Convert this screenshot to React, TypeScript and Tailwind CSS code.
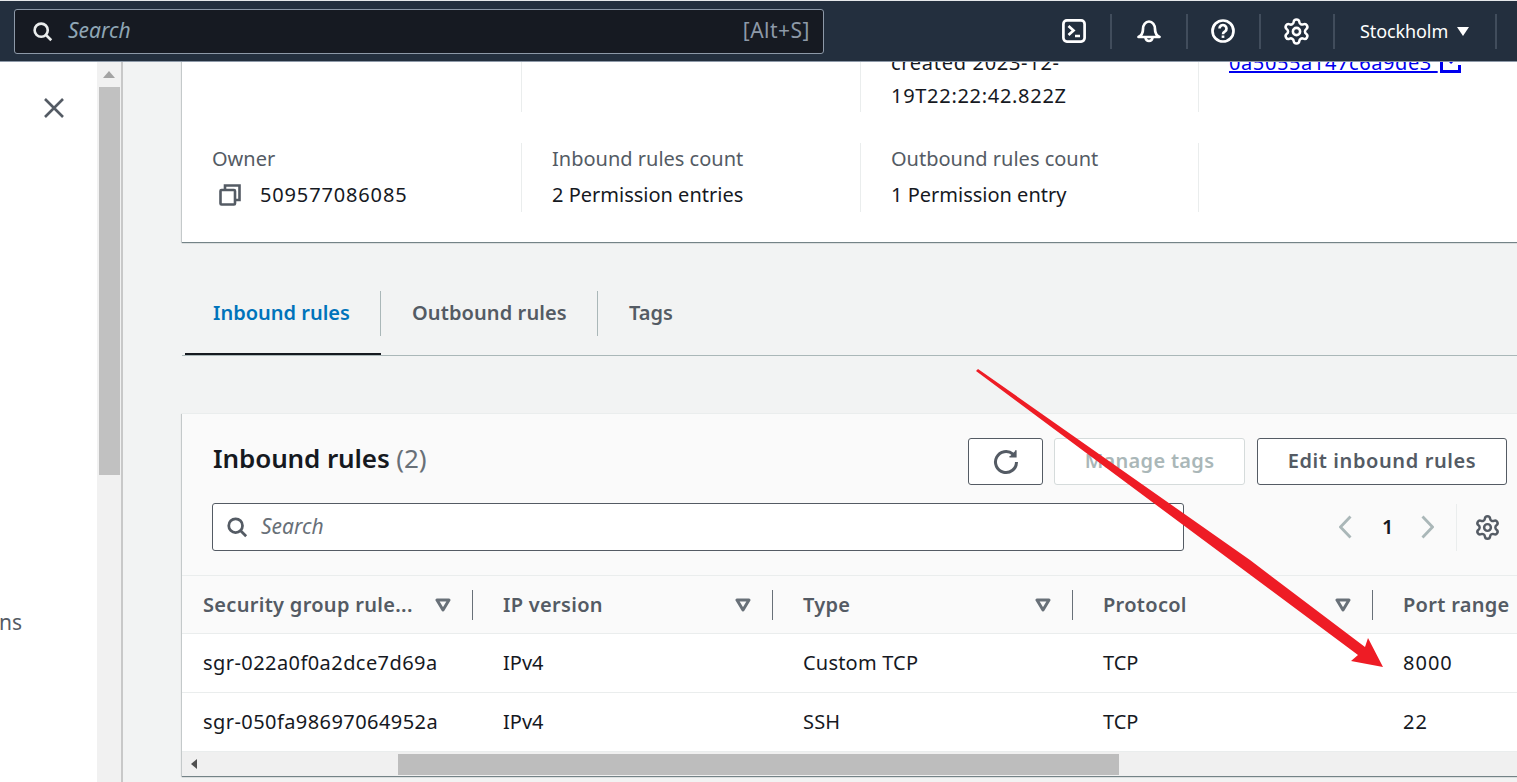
import { Settings } from "lucide-react";

const font = { fontFamily: '"Noto Sans", sans-serif' };

function SearchIcon({ className }: { className?: string }) {
  return (
    <svg viewBox="0 0 24 24" fill="none" stroke="currentColor" strokeWidth="3" className={className}>
      <circle cx="10.500" cy="10.500" r="7.500" />
      <path d="M16 16l6 6" />
    </svg>
  );
}

function SortIcon() {
  return (
    <svg viewBox="0 0 16 14" className="w-4 h-[14px] shrink-0" fill="none" stroke="#687078" strokeWidth="3">
      <path d="M2 2h12L8 12z" strokeLinejoin="round" />
    </svg>
  );
}

function Chevron({ flip }: { flip?: boolean }) {
  return (
    <svg viewBox="0 0 13 24" className="w-[13px] h-[24px] shrink-0" fill="none" stroke="#aab7b8" strokeWidth="2.800">
      <path d={flip ? "M1.500 1.500L11.500 12L1.500 22.500" : "M11.500 1.500L1.500 12L11.500 22.500"} />
    </svg>
  );
}

function Divider() {
  return <div className="w-[2px] h-[35px] bg-[#414d5c]" />;
}

function TopBar() {
  return (
    <header className="h-[61px] bg-[#232f3e] flex items-center shrink-0 border-t border-[#e6e8ea] text-white">
      <div className="ml-[14px] w-[810px] h-[45px] bg-[#161a22] border border-[#8d99a8] rounded-[3px] flex items-center pl-[17px] pr-[13px]">
        <SearchIcon className="w-[21px] h-[21px] text-[#eaeded]" />
        <span className="ml-[15px] italic text-[21px] text-[#8fa6b5]">Search</span>
        <span className="ml-auto text-[21px] tracking-[0.5px] text-[#8d99a8]">[Alt+S]</span>
      </div>
      <div className="ml-[238px] w-[24px] h-[24px]">
        <svg viewBox="0 0 24 24" fill="none" stroke="white" strokeWidth="2.700" className="w-full h-full">
          <rect x="1.400" y="1.400" width="21.200" height="21.200" rx="3.500" />
          <path d="M6.500 7l5 4.500-5 4.500M13 17h5" />
        </svg>
      </div>
      <div className="ml-[24px]"><Divider /></div>
      <div className="ml-[25px] w-[24px] h-[24px]">
        <svg viewBox="0 0 24 24" fill="none" stroke="white" strokeWidth="2.700" strokeLinejoin="round" className="w-full h-full">
          <path d="M1.500 18c2-1 4.500-3 4.500-8 0-4 2.500-7.500 6-7.500s6 3.500 6 7.500c0 5 2.500 7 4.500 8z" />
          <path d="M8.500 18.500a3.500 3.500 0 0 0 7 0" />
        </svg>
      </div>
      <div className="ml-[25px]"><Divider /></div>
      <div className="ml-[23px] w-[24px] h-[24px]">
        <svg viewBox="0 0 24 24" fill="none" stroke="white" strokeWidth="2.700" className="w-full h-full">
          <circle cx="12" cy="12" r="10.500" />
          <path d="M8.500 9.500a3.500 3.500 0 1 1 5.500 2.900c-1.300.8-2 1.400-2 2.800" />
          <path d="M12 16.500v2.400" />
        </svg>
      </div>
      <div className="ml-[24px]"><Divider /></div>
      <Settings className="ml-[21px] text-white" size={29} strokeWidth={2.100} />
      <div className="ml-[22px]"><Divider /></div>
      <span className="ml-[25px] text-[18px] tracking-[-0.1px] text-white">Stockholm</span>
      <svg viewBox="0 0 12 9" className="ml-[9px] w-[12px] h-[9px]"><path d="M0 0h12L6 9z" fill="white" /></svg>
      <div className="ml-[26px]"><Divider /></div>
    </header>
  );
}

function SideNav() {
  return (
    <aside className="w-[97px] shrink-0 bg-white overflow-hidden text-[#545b64]">
      <svg viewBox="0 0 20 20" className="mt-[36px] ml-[44px] w-[20px] h-[20px]" fill="none" stroke="#545b64" strokeWidth="2.600">
        <path d="M1 1l18 18M19 1L1 19" />
      </svg>
      <div className="mt-[489px] -ml-[1px] text-[21px] leading-[30px]">ns</div>
    </aside>
  );
}

function PageScrollbar() {
  return (
    <div className="w-[26px] shrink-0 bg-[#f1f1f1] border-r-2 border-r-[#c8c8c8] flex flex-col items-center">
      <svg viewBox="0 0 12 7" className="mt-[9px] w-[12px] h-[7px]"><path d="M0 7h12L6 0z" fill="#a3a3a3" /></svg>
      <div className="mt-[9px] w-[21px] h-[388px] bg-[#c1c1c1]" />
    </div>
  );
}

function Detail({ label, value, last }: { label: string; value: React.ReactNode; last?: boolean }) {
  return (
    <div className={`h-[69px] pl-[30px] ${last ? "" : "border-r border-[#eaeded]"}`}>
      <div className="text-[20px] leading-[32px] text-[#545b64]">{label}</div>
      <div className="mt-[2px] text-[20px] leading-[36px] text-[#16191f] flex items-center">{value}</div>
    </div>
  );
}

function SummaryCard() {
  return (
    <section className="-mt-[50px] w-[1400px] bg-white shadow-[0_1px_1px_0_rgba(0,28,36,0.45),-1px_1px_1px_0_rgba(0,28,36,0.12)] pb-[30px]">
      <div className="grid grid-cols-[340px_339px_338px_1fr] h-[100px] text-[20px] leading-[33px] text-[#16191f]">
        <div className="border-r border-[#eaeded]" />
        <div className="border-r border-[#eaeded]" />
        <div className="border-r border-[#eaeded] pl-[30px] flex flex-col justify-end">
          <div className="w-[220px] tracking-[0.7px]">created 2023-12-19T22:22:42.822Z</div>
        </div>
        <div className="pl-[30px] pt-[34px]">
          <span className="text-[#0000ee] underline decoration-2 tracking-[0.6px] whitespace-pre">0a5055a147c6a9de3 </span>
          <svg viewBox="0 0 21 21" className="inline-block ml-[2px] w-[21px] h-[21px] align-[-3px]" fill="none" stroke="#0000ee" strokeWidth="3">
            <path d="M8 2H1.500v17.500h18V13M10 11l6-6" />
            <path d="M11 3h7v7z" fill="#0000ee" stroke="none" />
          </svg>
        </div>
      </div>
      <div className="grid grid-cols-[340px_339px_338px_1fr] mt-[31px]">
        <Detail
          label="Owner"
          value={
            <>
              <svg viewBox="0 0 22 22" className="ml-[7px] mr-[19px] w-[22px] h-[22px]" fill="none" stroke="#545b64" strokeWidth="2.600">
                <rect x="1.500" y="6" width="14.500" height="14.500" rx="1" />
                <path d="M6 6V1.500h14.500V16H16" />
              </svg>
              <span className="tracking-[0.85px]">509577086085</span>
            </>
          }
        />
        <Detail label="Inbound rules count" value="2 Permission entries" />
        <Detail label="Outbound rules count" value="1 Permission entry" />
        <div />
      </div>
    </section>
  );
}

function Tabs() {
  return (
    <nav className="mt-[49px] w-[1400px] h-[65px] border-b border-[#aab7b8] flex text-[20px] font-semibold">
      <div className="ml-[3px] w-[196px] h-[64px] border-b-[2px] border-[#16191f]">
        <div className="h-[45px] pl-[28px] pb-[2px] flex items-center border-r border-[#aab7b8] text-[#0073bb]">Inbound rules</div>
      </div>
      <div className="w-[217px] h-[45px] pl-[31px] pb-[2px] flex items-center border-r border-[#aab7b8] tracking-[0.1px] text-[#545b64]">Outbound rules</div>
      <div className="h-[45px] pl-[31px] pb-[2px] flex items-center text-[#545b64]">Tags</div>
    </nav>
  );
}

const rows = [
  ["sgr-022a0f0a2dce7d69a", "IPv4", "Custom TCP", "TCP", "8000"],
  ["sgr-050fa98697064952a", "IPv4", "SSH", "TCP", "22"],
];

const columns = ["Security group rule...", "IP version", "Type", "Protocol", "Port range"];

function RulesTable() {
  return (
    <div className="text-[20px]">
      <div className="grid grid-cols-[291px_300px_300px_300px_300px] h-[59px] border-y border-[#eaeded] bg-[#fafafa] font-semibold tracking-[0.3px] text-[#545b64]">
        {columns.map((col, i) => (
          <div key={col} className={`flex items-center ${i === 0 ? "pl-[21px]" : "pl-[30px]"}`}>
            <span>{col}</span>
            {i < 4 && (
              <>
                <span className="ml-auto"><SortIcon /></span>
                <span className="ml-[21px] w-px h-[30px] bg-[#687078]" />
              </>
            )}
          </div>
        ))}
      </div>
      {rows.map((row) => (
        <div key={row[0]} className="grid grid-cols-[291px_300px_300px_300px_300px] h-[59px] border-b border-[#eaeded] bg-white text-[#16191f]">
          <div className="flex items-center pl-[21px] tracking-[0.43px]">{row[0]}</div>
          <div className="flex items-center pl-[30px]">{row[1]}</div>
          <div className="flex items-center pl-[30px] tracking-[0.2px]">{row[2]}</div>
          <div className="flex items-center pl-[30px]">{row[3]}</div>
          <div className="flex items-center pl-[30px] tracking-[1px]">{row[4]}</div>
        </div>
      ))}
      <div className="h-[24px] bg-[#f0f0f0] flex items-center">
        <svg viewBox="0 0 6 10" className="ml-[9px] w-[6px] h-[10px]"><path d="M6 0v10L0 5z" fill="#505050" /></svg>
        <div className="ml-[201px] w-[721px] h-[21px] bg-[#bdbdbd]" />
      </div>
    </div>
  );
}

function RulesCard() {
  return (
    <section className="mt-[57px] w-[1400px] bg-[#fafafa] shadow-[0_1px_1px_0_rgba(0,28,36,0.45),-1px_1px_1px_0_rgba(0,28,36,0.12)] border-t border-[#eaeded]">
      <div className="w-[1325px] pl-[30px] pt-[24px] pb-[24px]">
        <div className="flex items-start">
          <h2 className="ml-px text-[26px] leading-[40px] font-semibold tracking-[-0.1px] text-[#16191f]">
            Inbound rules <span className="font-normal text-[#687078]">(2)</span>
          </h2>
          <button className="ml-auto w-[75px] h-[47px] bg-white border border-[#545b64] rounded-[3px] flex items-center justify-center">
            <svg viewBox="0 0 24 24" className="w-[28px] h-[28px]" fill="none" stroke="#545b64" strokeWidth="2.600">
              <path d="M21 12a9 9 0 1 1-3-6.700" />
              <path d="M20.500 2V7.500h-5.500" fill="#545b64" stroke="#545b64" strokeWidth="1.200" />
            </svg>
          </button>
          <button className="ml-[11px] w-[191px] h-[47px] pb-[2px] border border-[#d5dbdb] rounded-[3px] bg-white text-[20px] font-semibold tracking-[0.3px] text-[#aab7b8]">Manage tags</button>
          <button className="ml-[12px] w-[250px] h-[47px] pb-[2px] border border-[#545b64] rounded-[3px] bg-white text-[20px] font-semibold tracking-[0.6px] text-[#545b64]">Edit inbound rules</button>
        </div>
        <div className="mt-[18px] flex items-center">
          <div className="w-[972px] h-[48px] bg-white border border-[#545b64] rounded-[3px] flex items-center pl-[13px]">
            <SearchIcon className="w-[22px] h-[22px] text-[#545b64]" />
            <span className="ml-[13px] italic text-[21px] text-[#687078]">Search</span>
          </div>
          <span className="ml-[155px]"><Chevron /></span>
          <span className="ml-[30px] w-[10px] text-[20px] font-semibold text-[#16191f]">1</span>
          <span className="ml-[29px]"><Chevron flip /></span>
          <span className="ml-[22px] w-px h-[47px] bg-[#eaeded]" />
          <Settings className="ml-[17px] text-[#545b64]" size={27} strokeWidth={2.200} />
        </div>
      </div>
      <RulesTable />
    </section>
  );
}

export default function App() {
  return (
    <div style={font} className="relative h-[782px] overflow-hidden flex flex-col bg-[#f2f3f3]">
      <TopBar />
      <div className="flex flex-1 min-h-0 border-t border-[#8d99a8]">
        <SideNav />
        <PageScrollbar />
        <main className="flex-1 min-w-0 overflow-hidden pl-[59px]">
          <SummaryCard />
          <Tabs />
          <RulesCard />
        </main>
      </div>
      {/* red annotation arrow drawn over the page */}
      <svg viewBox="0 0 1517 782" className="absolute inset-0 w-[1517px] h-[782px] pointer-events-none">
        <polygon points="976,371 978,369 1250,560 1365,647 1368,638 1383,667 1351,661 1358,655" fill="#ee1c25" />
      </svg>
    </div>
  );
}
